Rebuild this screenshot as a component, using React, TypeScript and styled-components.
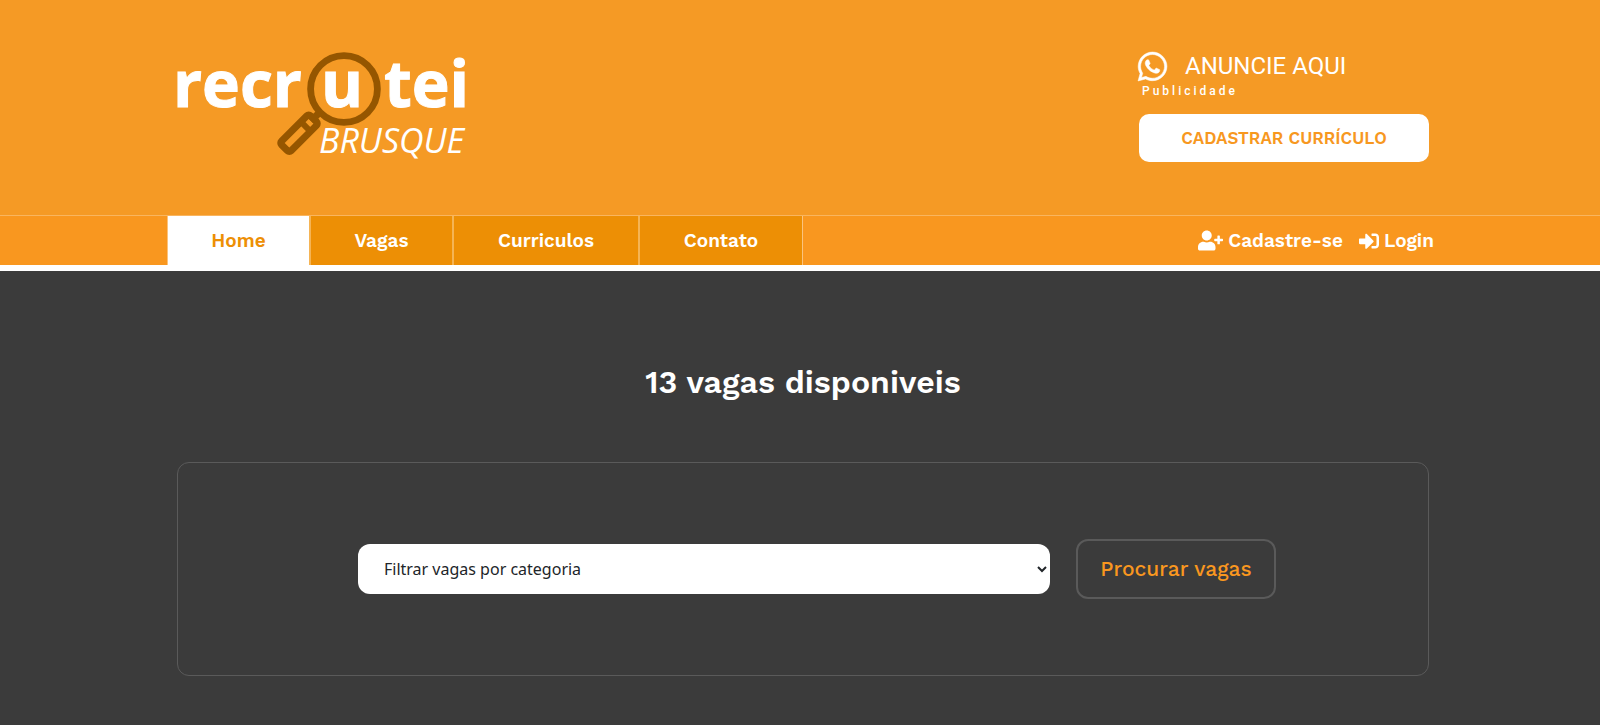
import React from "react";
import styled, { createGlobalStyle } from "styled-components";
import { FaWhatsapp, FaUserPlus, FaSignInAlt } from "react-icons/fa";

const GlobalStyle = createGlobalStyle`
  *, *::before, *::after { box-sizing: border-box; }
  html, body { margin: 0; background: #3b3b3b; }
  body { font-family: "Work Sans", Inter, "Liberation Sans", sans-serif; color: #fff; }
  a { color: inherit; text-decoration: none; }
`;

const Header = styled.header`
  background: #f59a25;
`;

const HeaderInner = styled.div`
  display: flex;
  justify-content: space-between;
  align-items: flex-start;
  padding: 32px 171px 45px 167px;
`;

const LogoLink = styled.a`
  display: block;
  line-height: 0;
`;

const Actions = styled.div`
  display: flex;
  flex-direction: column;
  width: 290px;
  padding-top: 15px;
`;

const AdLink = styled.a`
  display: flex;
  flex-direction: column;
  margin-left: -3px;
  font-family: Roboto, sans-serif;
`;

const AdTitle = styled.span`
  display: flex;
  align-items: center;
  gap: 16px;
  font-size: 24px;
  line-height: 38px;

  svg {
    stroke: currentColor;
    stroke-width: 8px;
  }
`;

const AdNote = styled.span`
  padding-left: 6px;
  font-size: 12px;
  font-weight: 500;
  line-height: 12px;
  letter-spacing: 3px;
`;

const ResumeButton = styled.button`
  height: 48px;
  margin-top: 17px;
  border: 0;
  border-radius: 10px;
  background: #fff;
  color: #f7981f;
  font: 600 17px/24px "Work Sans", Inter, sans-serif;
`;

const NavBar = styled.div`
  display: flex;
  justify-content: space-between;
  height: 50px;
  padding: 0 166px 0 167px;
  border-top: 1px solid #f9b55f;
  background: #f9971f;
`;

const Tabs = styled.nav`
  display: flex;
  border-left: 1px solid #fbc37d;
  border-right: 1px solid #fbc37d;
`;

const Tab = styled.a<{ $active?: boolean; $width: number }>`
  display: flex;
  align-items: center;
  justify-content: center;
  width: ${(p) => p.$width}px;
  background: ${(p) => (p.$active ? "#fff" : "#ed8f05")};
  color: ${(p) => (p.$active ? "#ed8f05" : "#fff")};
  font-size: 19px;
  font-weight: 600;

  & + & { border-left: 2px solid #f5b455; }
`;

const Account = styled.nav`
  display: flex;
  align-items: center;
  gap: 16px;
`;

const AccountLink = styled.a`
  display: flex;
  align-items: center;
  gap: 5px;
  font-size: 19px;
  font-weight: 600;
`;

const Main = styled.main`
  padding: 89px 171px 49px 177px;
  border-top: 6px solid #fff;
  background: #3b3b3b;
`;

const Title = styled.h1`
  margin: 0;
  font-size: 32px;
  font-weight: 600;
  line-height: 44px;
  text-align: center;
`;

const SearchPanel = styled.form`
  display: flex;
  align-items: center;
  justify-content: center;
  gap: 26px;
  margin-top: 58px;
  padding: 76px 152px 76px 180px;
  border: 1px solid #5a5a5a;
  border-radius: 12px;
`;

const CategorySelect = styled.select`
  flex: 1;
  height: 50px;
  padding: 0 0 0 22px;
  border: 0;
  border-radius: 12px;
  background-color: #fff;
  color: #212529;
  font: 400 16px/24px "Segoe UI", "Noto Sans", sans-serif;
`;

const SearchButton = styled.button`
  width: 200px;
  height: 60px;
  border: 2px solid #5a5a5a;
  border-radius: 12px;
  background: transparent;
  color: #f9971f;
  font: 500 21px/28px "Work Sans", Inter, sans-serif;
`;

const tabs = [
  { label: "Home", width: 141, active: true },
  { label: "Vagas", width: 143 },
  { label: "Curriculos", width: 186 },
  { label: "Contato", width: 164 },
];

function Logo() {
  return (
    <svg width="310" height="138" viewBox="167 32 310 138" role="img" aria-label="Recrutei Brusque">
      <g fill="none" stroke="#955600">
        <circle cx="344" cy="89" r="33.4" strokeWidth="6.8" />
        <path d="M311 121L320 112" strokeWidth="7" />
        <g transform="translate(299 133.3) rotate(-45)" strokeWidth="7">
          <rect x="-20.5" y="-6.8" width="41" height="13.6" rx="2.5" />
          <path d="M9.5 -7V7" strokeWidth="6" />
        </g>
      </g>
      <g fill="#fff" fontFamily='"Open Sans", sans-serif'>
        <g fontSize="64" fontWeight="700" stroke="#fff" strokeWidth="1">
          <text x="173" y="107">recr</text>
          <text x="321" y="107">u</text>
          <text x="384" y="107">tei</text>
        </g>
        <text x="319" y="153" fontSize="34" fontWeight="400" fontStyle="italic">BRUSQUE</text>
      </g>
    </svg>
  );
}

export default function App() {
  return (
    <>
      <GlobalStyle />
      <Header>
        <HeaderInner>
          <LogoLink href="#"><Logo /></LogoLink>
          <Actions>
            <AdLink href="#anuncie">
              <AdTitle><FaWhatsapp size={33} />ANUNCIE AQUI</AdTitle>
              <AdNote>Publicidade</AdNote>
            </AdLink>
            <ResumeButton type="button">CADASTRAR CURRÍCULO</ResumeButton>
          </Actions>
        </HeaderInner>
        <NavBar>
          <Tabs>
            {tabs.map((t) => (
              <Tab key={t.label} href={"#" + t.label.toLowerCase()} $active={t.active} $width={t.width}>
                {t.label}
              </Tab>
            ))}
          </Tabs>
          <Account>
            <AccountLink href="#cadastro"><FaUserPlus size={25} />Cadastre-se</AccountLink>
            <AccountLink href="#login"><FaSignInAlt size={20} />Login</AccountLink>
          </Account>
        </NavBar>
      </Header>
      <Main>
        <Title>13 vagas disponiveis</Title>
        <SearchPanel>
          <CategorySelect aria-label="Filtrar vagas por categoria">
            <option>Filtrar vagas por categoria</option>
          </CategorySelect>
          <SearchButton type="button">Procurar vagas</SearchButton>
        </SearchPanel>
      </Main>
    </>
  );
}
